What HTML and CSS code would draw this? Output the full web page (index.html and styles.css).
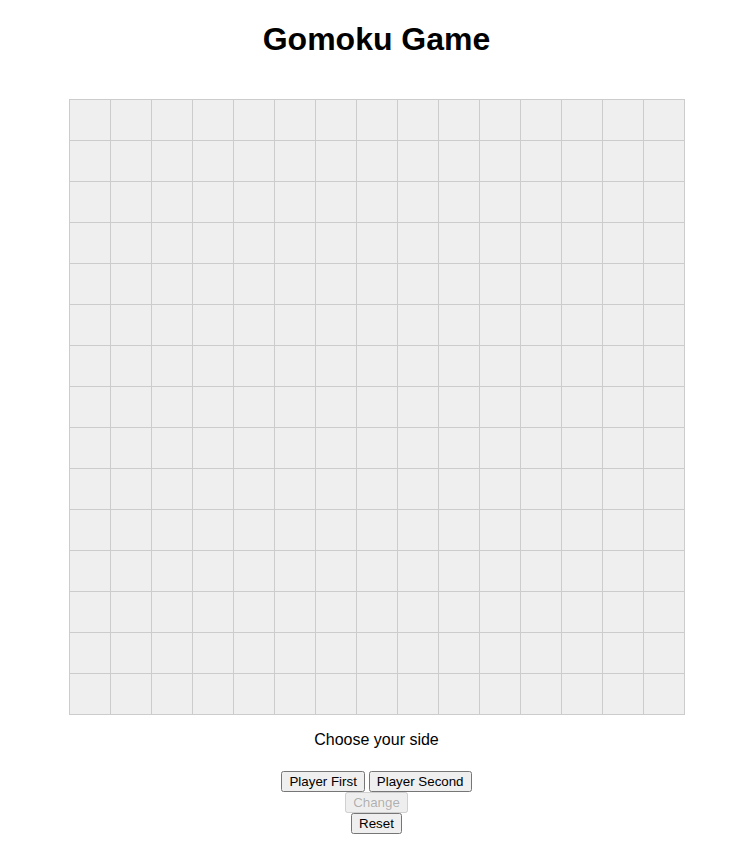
FILE: index.html
```html
<!DOCTYPE html>
<html lang="en">
<head>
<meta charset="utf-8">
<title>Gomoku Game</title>
<link rel="stylesheet" href="styles.css">
</head>
<body>
<div class="app">
  <h1 class="title">Gomoku Game</h1>
  <div class="board" id="board"></div>
  <p class="status">Choose your side</p>
  <div class="controls">
    <div class="row">
      <button class="btn">Player First</button>
      <button class="btn">Player Second</button>
    </div>
    <div class="row">
      <button class="btn" disabled>Change</button>
    </div>
    <div class="row">
      <button class="btn">Reset</button>
    </div>
  </div>
</div>
<script>
  var b = document.getElementById('board');
  for (var i = 0; i < 225; i++) {
    var c = document.createElement('div');
    c.className = 'cell';
    b.appendChild(c);
  }
</script>
</body>
</html>
```

FILE: styles.css
```css
html, body {
  margin: 0;
  padding: 0;
  background: #fff;
}
body {
  font-family: "Liberation Sans", Arial, sans-serif;
  color: #000;
}
.app {
  display: flex;
  flex-direction: column;
  align-items: center;
  padding: 8px 7px 0 9px;
}
.title {
  font-size: 32px;
  font-weight: bold;
  margin: 13px 0 21px 0;
  line-height: 37px;
}
.board {
  display: grid;
  grid-template-columns: repeat(15, 40px);
  grid-auto-rows: 40px;
  gap: 1px;
  padding: 1px;
  background: #cccccc;
  margin: 20px 0 0 0;
}
.cell {
  background: #efefef;
}
.status {
  font-size: 16px;
  margin: 16px 0 0 0;
  line-height: 18px;
}
.controls {
  display: flex;
  flex-direction: column;
  align-items: center;
  margin-top: 22px;
}
.row {
  display: flex;
  gap: 4px;
}
.btn {
  font-family: "Liberation Sans", Arial, sans-serif;
  font-size: 13.333px;
  padding: 1px 6px;
  line-height: normal;
}
```
